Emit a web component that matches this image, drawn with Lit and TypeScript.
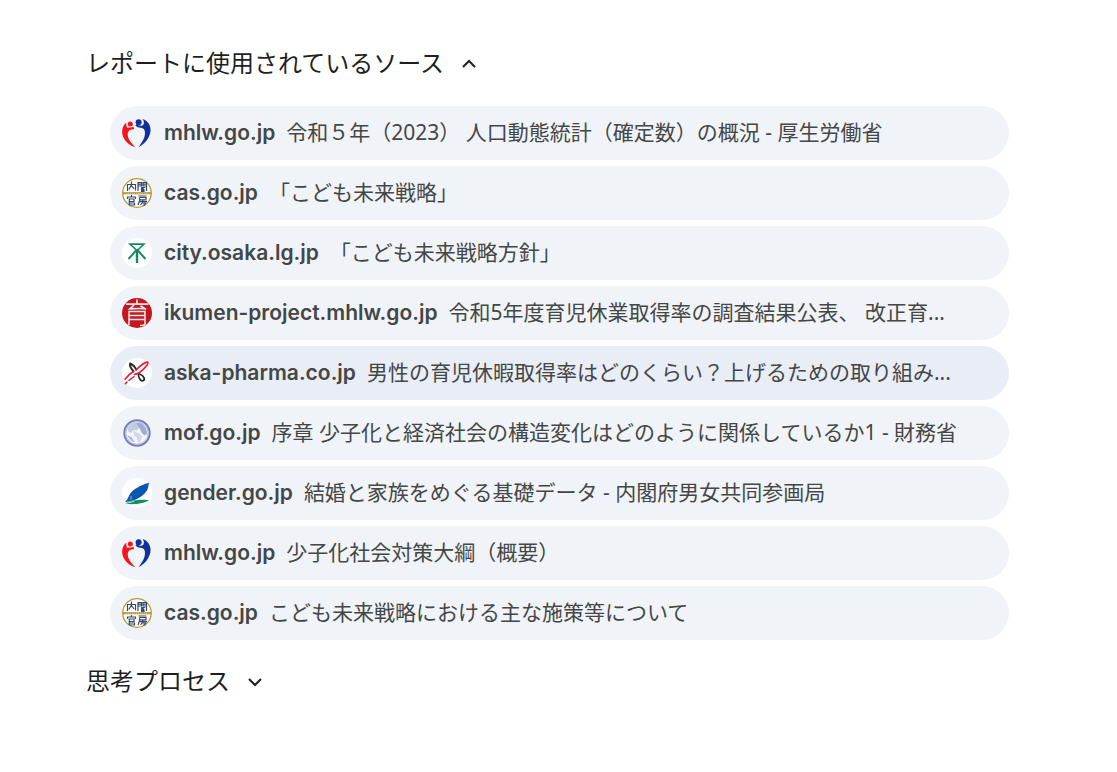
import { LitElement, html, css, svg } from "lit";
import { customElement, state } from "lit/decorators.js";
import { classMap } from "lit/directives/class-map.js";

interface Source {
  icon: string;
  domain: string;
  title: string;
  active?: boolean;
}

const sources: Source[] = [
  { icon: "mhlw", domain: "mhlw.go.jp", title: "令和５年（2023） 人口動態統計（確定数）の概況 - 厚生労働省" },
  { icon: "cas", domain: "cas.go.jp", title: "「こども未来戦略」" },
  { icon: "osaka", domain: "city.osaka.lg.jp", title: "「こども未来戦略方針」" },
  { icon: "ikumen", domain: "ikumen-project.mhlw.go.jp", title: "令和5年度育児休業取得率の調査結果公表、 改正育..." },
  { icon: "aska", domain: "aska-pharma.co.jp", title: "男性の育児休暇取得率はどのくらい？上げるための取り組み...", active: true },
  { icon: "mof", domain: "mof.go.jp", title: "序章 少子化と経済社会の構造変化はどのように関係しているか1 - 財務省" },
  { icon: "gender", domain: "gender.go.jp", title: "結婚と家族をめぐる基礎データ - 内閣府男女共同参画局" },
  { icon: "mhlw", domain: "mhlw.go.jp", title: "少子化社会対策大綱（概要）" },
  { icon: "cas", domain: "cas.go.jp", title: "こども未来戦略における主な施策等について" },
];

const icons: Record<string, unknown> = {
  mhlw: svg`
    <circle cx="8.300" cy="6" r="2.500" fill="#f5151b"/>
    <path d="M4.500 4.500C.5 7.500-.8 13 .8 18C2.600 23 7 27.500 13.400 29.300C10.800 26.500 7.500 23.500 6.200 19.500C5 15.500 6 12.500 8.500 11.700C9.500 11.300 11 11.500 12.200 11L11.500 8.800C9.500 9.600 6.800 9.300 5.300 10C4.200 8.500 4 6.500 4.500 4.500Z" fill="#f5151b"/>
    <circle cx="16.600" cy="4.300" r="3" fill="#12309b"/>
    <path d="M20.500 1C26 2.800 29 7.500 28.500 13C27.800 19.500 23.500 25.500 16.500 29.300C19.500 25 22.800 20.500 23 15.500C23.200 11.800 21.500 9.800 19 9.700C16.500 9.800 14.500 9 13.300 7.300L14.800 6.300C17.200 8.200 20.300 8.200 21.500 6.400C22.300 4.700 21.800 2.500 20.500 1Z" fill="#12309b"/>`,
  cas: svg`
    <circle cx="15" cy="15" r="14.300" fill="#fff" stroke="#b79a35" stroke-width="1.300"/>
    <g fill="none" stroke="#34496f" stroke-width="1.200">
      <path d="M5.500 13V6.500H13.500V12.500M9.500 3.500V7L6.800 11.500M9.500 7.500L12 11"/>
      <path d="M16 13V4.500H19.500V8H16M16 6.200H19.500M24.500 13V4.500H21V8H24.500M21 6.200H24.500M19 9.500H22L19 12M19 10L22.500 12M19 12.300H22V13.300H19"/>
      <path d="M9.500 17V19M5.500 21V19H13.500V21M7.300 20.500V27M7.300 21H12V23.500H7.300M7.300 25H12.500V27H7.300"/>
      <path d="M16.500 18H24.500M17.500 19.500H24V21.800H17.500M17.500 19.500V23L16 27M20.800 22V23.300M18 23.600H25M20.800 24L18.500 27M20.600 25H23.500L22.800 27H21"/>
    </g>
    <path d="M1 15.200H29" stroke="#b79a35" stroke-width="2.200"/>
    <path d="M4 15.200H26" stroke="#e5d9a9" stroke-width=".7" stroke-dasharray="1 1"/>`,
  osaka: svg`
    <circle cx="15" cy="15" r="15" fill="#fff"/>
    <path d="M6 5.300H24L16.200 12.500V25H13.800V12.500ZM10 7.100L15 11.500L20 7.100Z" fill="#128a63" fill-rule="evenodd"/>
    <path d="M15 11.500L6.500 21M15 11.500L23.500 21" stroke="#128a63" stroke-width="1.900"/>`,
  ikumen: svg`
    <circle cx="15" cy="15" r="15" fill="#c4161e"/>
    <g fill="none" stroke="#fbe9e8" stroke-width="1.700">
      <path d="M15 1.500V6M4 6.200H26.500M12 7L8 10.800Q15 10.300 22.500 10.600M18.500 7.800L24 11.500"/>
      <path d="M7 27V13.500H23V26Q23 27.500 18 27.500M7 17.600H23M7 21.500H23" stroke-width="1.500"/>
    </g>`,
  aska: svg`
    <circle cx="15" cy="15" r="15" fill="#fff"/>
    <g fill="none" stroke-linecap="round" stroke-linejoin="round">
      <path d="M8.300 5.500C7.500 7 9 10.500 11.500 13.200M8.300 5.500C10.500 6.500 13 9 14.300 11.500" stroke="#292526" stroke-width="2"/>
      <path d="M17 15.800C15.800 17 17 20 18.500 21.800C20.500 24 23 22.300 22 19.800C21.300 18.300 19.800 17 18.500 16.500" stroke="#292526" stroke-width="1.800"/>
      <path d="M14 12C18.500 7.500 24 3.500 25.600 4.200C27 5.500 22.500 11 17.500 14.500C15 16 13.500 16.200 12.500 16.500" stroke="#e51b38" stroke-width="1.700"/>
      <path d="M11.500 13.500C8 15.500 5 18.500 3 21.200M3.300 25.800L5 24M7 22.300L12 18.500" stroke="#e51b38" stroke-width="1.500"/>
    </g>`,
  mof: svg`
    <circle cx="15" cy="15" r="12.700" fill="#f3f5fb" stroke="#7580b9" stroke-width="2"/>
    <circle cx="15" cy="15" r="11.200" fill="none" stroke="#b4bcde" stroke-width="1"/>
    <path d="M5.500 11C7 7 10.500 4.800 14 4.500L17 6.800L15.300 8L17 10L14.500 12.500L11 12L9 15L6.500 13.500Z" fill="#c3cae3"/>
    <path d="M14.500 4.500L20 5.500L24 10L25.300 16L22.500 17.500L19.500 14.500L18 11L15.500 8Z" fill="#a3acd3"/>
    <path d="M11 12.500L17 15.500L20.500 18.500L17.500 24.500L15.500 23.500L15 20L12 17Z" fill="#d3d8ec"/>
    <path d="M5 17L9.500 19L13 24.500L8.500 22.500Z" fill="#b4bddd"/>`,
  gender: svg`
    <circle cx="15" cy="15" r="15" fill="#fff"/>
    <path d="M27.500 4.800C22 6 14 9.500 9.500 14C6.500 17 7 20 3 24C13.500 23.500 22.500 17.500 25.500 11.500C26.800 8.500 26 6.500 27.500 4.800Z" fill="#0758ae"/>
    <path d="M9 18V22.500" stroke="#fff" stroke-width=".5"/>
    <path d="M3 25.500C8.500 21.800 22 21 27 22.300C23.500 25.200 10 27.500 3 25.500Z" fill="#109060"/>
    <path d="M3 25.500L12 23.500" stroke="#fff" stroke-width=".7"/>`,
};

@customElement("source-row")
export class SourceRow extends LitElement {
  static properties = { source: { attribute: false } };
  declare source: Source;

  static styles = css`
    :host { display: block; }
    .row {
      display: flex;
      align-items: center;
      gap: 12px;
      height: 54px;
      box-sizing: border-box;
      padding: 0 48px 0 12px;
      border-radius: 27px;
      background: #f0f3f8;
      color: #444746;
      font-size: 21px;
      line-height: 30px;
      text-decoration: none;
      white-space: nowrap;
    }
    .row:hover, .active { background: #e8edf6; }
    .icon { width: 30px; height: 30px; flex: none; }
    .text {
      min-width: 0;
      overflow: hidden;
      text-overflow: ellipsis;
    }
    .domain { font-weight: 600; margin-right: 11px; }
    .title { font-family: "Noto Sans", "Noto Sans CJK JP", sans-serif; line-height: 1; }
  `;

  render() {
    const s = this.source;
    return html`<a class=${classMap({ row: true, active: !!s.active })} href="https://${s.domain}">
      <svg class="icon" viewBox="0 0 30 30" aria-hidden="true">${icons[s.icon]}</svg>
      <span class="text"><span class="domain">${s.domain}</span><span class="title">${s.title}</span></span>
    </a>`;
  }
}

@customElement("app-root")
export class AppRoot extends LitElement {
  @state() private sourcesOpen = true;
  @state() private thoughtsOpen = false;

  static styles = css`
    :host {
      display: block;
      box-sizing: border-box;
      min-height: 100vh;
      padding: 46px 108px 60px 86px;
      background: #fff;
      color: #1f1f1f;
      font-family: Inter, "Noto Sans CJK JP", sans-serif;
    }
    .toggle {
      display: flex;
      align-items: center;
      gap: 13px;
      padding: 0;
      border: 0;
      background: none;
      color: inherit;
      font: inherit;
      font-size: 24px;
      line-height: 36px;
      cursor: pointer;
    }
    .chevron { width: 24px; height: 24px; }
    .open .chevron { transform: rotate(180deg); }
    .list {
      display: flex;
      flex-direction: column;
      gap: 6px;
      list-style: none;
      margin: 24px 0;
      padding: 0 0 0 24px;
    }
  `;

  private toggle(label: string, open: boolean, flip: () => void) {
    return html`<button class=${classMap({ toggle: true, open })} aria-expanded=${open} @click=${flip}>
      <span>${label}</span>
      <svg class="chevron" viewBox="0 0 24 24" aria-hidden="true">
        <path d="M6 9L12 15L18 9" fill="none" stroke="currentColor" stroke-width="2"/>
      </svg>
    </button>`;
  }

  render() {
    return html`
      ${this.toggle("レポートに使用されているソース", this.sourcesOpen, () => (this.sourcesOpen = !this.sourcesOpen))}
      ${this.sourcesOpen
        ? html`<ul class="list">${sources.map((s) => html`<li><source-row .source=${s}></source-row></li>`)}</ul>`
        : null}
      ${this.toggle("思考プロセス", this.thoughtsOpen, () => (this.thoughtsOpen = !this.thoughtsOpen))}
    `;
  }
}
